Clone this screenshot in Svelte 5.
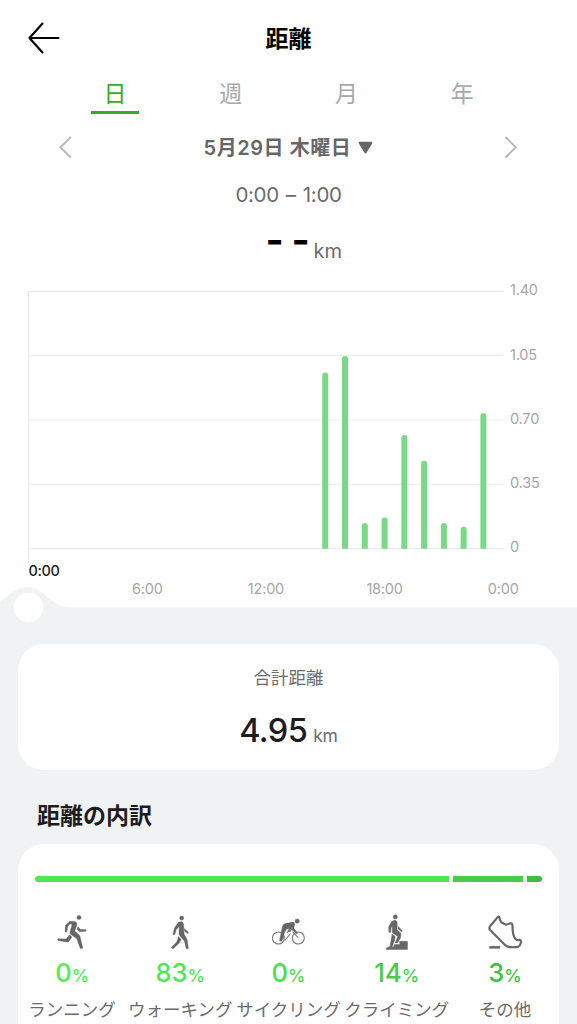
<script lang="ts">
    const tabs = ["日", "週", "月", "年"];
    let active = $state("日");

    // km walked, by hour of the day
    const hours = [
        { hour: 15, km: 0.96 },
        { hour: 16, km: 1.05 },
        { hour: 17, km: 0.14 },
        { hour: 18, km: 0.17 },
        { hour: 19, km: 0.62 },
        { hour: 20, km: 0.48 },
        { hour: 21, km: 0.14 },
        { hour: 22, km: 0.12 },
        { hour: 23, km: 0.74 },
    ];

    const ticks = ["1.40", "1.05", "0.70", "0.35", "0"];
    const times = [
        { hour: 6, text: "6:00" },
        { hour: 12, text: "12:00" },
        { hour: 18, text: "18:00" },
        { hour: 24, text: "0:00" },
    ];

    const base = 268.8;
    const x = (hour: number) => 28.7 + hour * 19.77;
    const y = (km: number) => base - (km / 1.4) * 257;

    const bar = (hour: number, km: number) => {
        const l = x(hour) - 3;
        return `M${l} ${base}V${y(km) + 3}a3 3 0 0 1 6 0V${base}z`;
    };

    const parts = [
        { id: "run", name: "ランニング", percent: 0, color: "#50ec52" },
        { id: "walk", name: "ウォーキング", percent: 83, color: "#4fe750" },
        { id: "cycle", name: "サイクリング", percent: 0, color: "#4bdc4d" },
        { id: "climb", name: "クライミング", percent: 14, color: "#46cc49" },
        { id: "other", name: "その他", percent: 3, color: "#3fbe43" },
    ];
    const shares = parts.filter((p) => p.percent > 0);
</script>

<main>
    <header>
        <button class="back" aria-label="戻る">
            <svg width="32" height="34" viewBox="0 0 32 34">
                <path d="M14.5 2.5L1.5 17L14.5 31.5M1.5 17H30.5" />
            </svg>
        </button>
        <h1>距離</h1>
    </header>

    <nav>
        {#each tabs as tab}
            <button class:active={active === tab} onclick={() => (active = tab)}>{tab}</button>
        {/each}
    </nav>

    <div class="date">
        <svg width="14" height="22" viewBox="0 0 14 22">
            <path d="M11.3 1.5L1.5 11.3L11.3 21" />
        </svg>
        <div class="day">
            <span>5月29日 木曜日</span>
            <svg class="caret" width="15" height="13" viewBox="0 0 15 13">
                <path d="M1.9 1.9H13.1L7.5 11.2z" />
            </svg>
        </div>
        <svg width="14" height="22" viewBox="0 0 14 22">
            <path d="M2 1.5L11.8 11.3L2 21" />
        </svg>
    </div>

    <div class="range">0:00 – 1:00</div>

    <div class="reading">
        <span class="dash">-</span>
        <span class="dash">-</span>
        <span class="unit">km</span>
    </div>

    <svg class="chart" width="577" height="356" viewBox="0 0 577 356">
        <g class="grid">
            {#each ticks as tick, i}
                <path d="M28 {11.5 + i * 64.25}H503" />
                <text x="510" y={15.3 + i * 64.25}>{tick}</text>
            {/each}
            <path d="M28.5 11V283" />
            {#each times as time}
                <text x={x(time.hour)} y="314" text-anchor="middle">{time.text}</text>
            {/each}
        </g>
        {#each hours as h}
            <path class="bar" d={bar(h.hour, h.km)} />
        {/each}
        <text class="selected" x="28.5" y="296">0:00</text>
        <path class="ground" d="M0 322C9 315 16 307 28.5 307C45 307 49 327.3 71 327.3H577V356H0z" />
        <circle cx="28.5" cy="327.5" r="14.8" fill="#fff" />
    </svg>

    <section class="card total">
        <div class="label">合計距離</div>
        <div class="value"><span>4.95</span><small>km</small></div>
    </section>

    <h2>距離の内訳</h2>

    <section class="card details">
        <div class="shares">
            {#each shares as share}
                <span style="flex-grow: {share.percent}; background: {share.color}"></span>
            {/each}
        </div>

        <div class="parts">
            {#each parts as part}
                <div class="part">
                    <svg class="icon" width="36" height="36" viewBox="0 0 36 36">
                        {#if part.id === "run"}
                            <circle cx="25" cy="3.5" r="2.1" />
                            <path d="M15.8 7.2L20.8 7.4Q23.6 8.3 22.8 11L20.8 17L25.8 21.8L28.8 34Q27.5 35.4 26 33.8L22.7 24.6L16.8 20.5Q15.4 19 16.3 16.5L18.2 10.2L15.7 10L13.8 12.2L13 17.6Q12 19 11 17.6L11.5 11.2z" />
                            <path d="M24 12.5L26.3 15.6L31.7 15.4Q32.6 16.4 31.5 17.2L25.3 17.8L23 15.2z" />
                            <path d="M15.4 20.8L18 23L14.8 27.6Q14 28.2 13 28.1L4 26.4Q2.7 25.4 4 24.8L12.3 25z" />
                        {:else if part.id === "walk"}
                            <circle cx="19.7" cy="4" r="2.1" />
                            <path d="M16.2 8.4L19.4 7.5Q21.5 8 21.6 10.3L22 19.8L25 25.2L26.4 34.2Q25.3 35.6 24.1 34.2L22.4 27L17.6 21.5Q16.7 20.2 17 18L17.2 12.4L14.2 15.7L12.8 20.5Q11.7 21.7 11 20.2L12.3 14.3z" />
                            <path d="M22.5 14.7L26.3 18.2Q26.7 19.4 25.5 19.4L22.3 16.9zM16.5 22.5L19.2 25.6L17.4 29L11 34.7Q9.4 34.6 9.5 33.2L14.7 28.1z" />
                        {:else if part.id === "cycle"}
                            <circle cx="27.2" cy="7.1" r="2.2" />
                            <g class="line">
                                <circle cx="8.4" cy="24" r="6" />
                                <circle cx="28.3" cy="24" r="6" />
                                <path d="M15 26.5L20.5 19.5M22.6 17.5L28.3 24" />
                            </g>
                            <path d="M15 9.6L23 8Q24.9 8.2 24.7 10L23.9 14.3L27.7 18.8L26.8 20L21.8 15.5L22 12.8L16.2 14L14.6 17L13.4 24L11.4 27.4L9.5 26.5L12.2 13.5Q12.5 10.5 15 9.6z" />
                            <path d="M15.5 12L22.5 11L21 17L16.9 18.8L18 16.5L20 14.8L16.5 15L14.6 18.5z" />
                        {:else if part.id === "climb"}
                            <circle cx="16.3" cy="2.9" r="2.1" />
                            <path d="M12.7 7.5L15.8 6.1Q18.3 6.7 18.2 9L18.1 15.8L22 19.4L21.5 24L18.4 29H16L18.8 22.5L13.3 18.8L13.2 11.8L12 14L11.7 18.2Q10.6 19.1 9.8 18L9.7 12.7z" />
                            <path d="M19.2 12.4L23.3 16.8L22.7 18L19.2 15zM13 20.2L16.2 22.4L15.7 26L13.2 33L8 34.4L11.2 31.7z" />
                            <path d="M7.3 35.5L7.5 33.9L14.6 33L15.4 30.5H20.6V27.3H28.5V35.5z" />
                        {:else}
                            <path
                                class="outline"
                                d="M3 12.3L10.7 3.1Q11.8 2 12.5 3.4Q13.2 8.4 15.7 9.1L18.5 10.5Q20 10.9 22.2 9.6Q25.3 8.5 25.5 11.3Q25.4 21.7 28.7 25.2Q30.5 26.7 32.5 25.7Q34.5 26.3 33.9 28.7Q33.5 31.7 31 32.8Q27 33.5 23.5 33.1Q20.2 32.9 17.8 30.8L4.1 17Q1.3 14.7 3 12.3z"
                            />
                            <path d="M2.5 32.2H13V34.4H2.5z" />
                        {/if}
                    </svg>
                    <div class="percent" style="color: {part.color}">{part.percent}<small>%</small></div>
                    <div class="name">{part.name}</div>
                </div>
            {/each}
        </div>
    </section>
</main>

<style>
    :global(body) {
        overflow: hidden;
    }

    main {
        display: flex;
        flex-direction: column;
        box-sizing: border-box;
        width: 577px;
        height: 1024px;
        overflow: hidden;

        background: linear-gradient(#fff 608px, #f0f2f4 608px);
        color: #6b6b6b;
        font-family: Inter, "Noto Sans CJK JP", sans-serif;
    }

    main > * {
        flex-shrink: 0;
    }

    button {
        padding: 0;
        border: 0;
        background: none;
        font: inherit;
        color: inherit;
    }

    svg {
        display: block;
    }

    header {
        display: grid;
        grid-template-columns: 80px 1fr 80px;
        align-items: center;
        height: 76px;
    }

    .back {
        padding-left: 28px;
    }

    .back path {
        fill: none;
        stroke: #000;
        stroke-width: 2.1;
        stroke-linecap: round;
        stroke-linejoin: round;
    }

    h1 {
        margin: 2px 0 0;
        font-size: 23px;
        font-weight: 700;
        line-height: 36px;
        text-align: center;
        color: #000;
    }

    nav {
        display: grid;
        grid-template-columns: repeat(4, 1fr);
        justify-items: center;
        height: 38px;
        padding: 0 57px;
    }

    nav button {
        box-sizing: border-box;
        width: 48px;
        height: 38px;
        border-bottom: 3px solid transparent;
        font-size: 23px;
        line-height: 32px;
        color: #aaa;
    }

    nav .active {
        border-color: #35ad27;
        color: #35ad27;
    }

    .date {
        display: flex;
        align-items: center;
        justify-content: space-between;
        height: 66px;
        padding: 0 59px;
    }

    .date > svg path {
        fill: none;
        stroke: #b8b8b8;
        stroke-width: 1.9;
        stroke-linecap: round;
    }

    .day {
        display: flex;
        align-items: center;
        gap: 7px;
        padding-top: 1px;
        font-size: 20px;
        font-weight: 600;
        letter-spacing: .55px;
        line-height: 30px;
        color: #666;
    }

    .caret path {
        fill: #666;
        stroke: #666;
        stroke-width: 2.4;
        stroke-linejoin: round;
    }

    .range {
        height: 30px;
        font-size: 20.5px;
        letter-spacing: -.35px;
        word-spacing: 1.7px;
        line-height: 30px;
        text-align: center;
    }

    .reading {
        display: flex;
        align-items: flex-end;
        justify-content: flex-end;
        height: 56px;
        padding-right: 235px;
        margin-bottom: 14px;
    }

    .dash {
        width: 26px;
        font-size: 39px;
        font-weight: 700;
        line-height: 53px;
        color: #000;
    }

    .dash + .dash {
        width: 22px;
    }

    .unit {
        font-size: 20px;
        line-height: 30px;
    }

    .grid path {
        fill: none;
        stroke: #ebebeb;
    }

    .grid text {
        font-size: 14.5px;
        fill: #a6a6a6;
        letter-spacing: -.2px;
    }

    .bar {
        fill: #78da86;
    }

    .selected {
        font-size: 14.5px;
        font-weight: 500;
        letter-spacing: -.4px;
        fill: #222;
    }

    .ground {
        fill: #f0f2f4;
    }

    .card {
        margin: 0 18px;
        border-radius: 26px;
        background: #fff;
    }

    .total {
        height: 126px;
        margin-top: 8px;
        text-align: center;
    }

    .label {
        padding-top: 21px;
        font-size: 17.5px;
        line-height: 26px;
    }

    .value {
        display: flex;
        align-items: baseline;
        justify-content: center;
        gap: 6px;
        padding-top: 18px;
        font-size: 32.5px;
        font-weight: 500;
        letter-spacing: -.6px;
        line-height: 44px;
        color: #1c1c1e;
    }

    .value small {
        font-size: 17.5px;
        font-weight: 400;
        line-height: 20px;
        letter-spacing: -.2px;
        color: #6b6b6b;
    }

    h2 {
        margin: 28px 37px 9px;
        font-size: 23px;
        font-weight: 600;
        line-height: 37px;
        color: #1c1c1e;
    }

    .details {
        height: 210px;
    }

    .shares {
        display: flex;
        gap: 4px;
        height: 6px;
        margin: 32px 17px 0;
        border-radius: 3px;
        overflow: hidden;
    }

    .parts {
        display: grid;
        grid-template-columns: repeat(5, 1fr);
        margin-top: 32px;
    }

    .part {
        display: flex;
        flex-direction: column;
        align-items: center;
    }

    .icon {
        fill: #666;
        stroke: #666;
        stroke-width: .4;
    }

    .line {
        fill: none;
        stroke: #777;
        stroke-width: 1.1;
    }

    .outline {
        fill: none;
        stroke-width: 2.2;
        stroke-linejoin: round;
    }

    .percent {
        font-size: 25.5px;
        font-weight: 500;
        line-height: 46px;
    }

    .percent small {
        font-size: 17.5px;
    }

    .name {
        margin-top: -2px;
        font-size: 17.5px;
        line-height: 26px;
        white-space: nowrap;
    }
</style>
